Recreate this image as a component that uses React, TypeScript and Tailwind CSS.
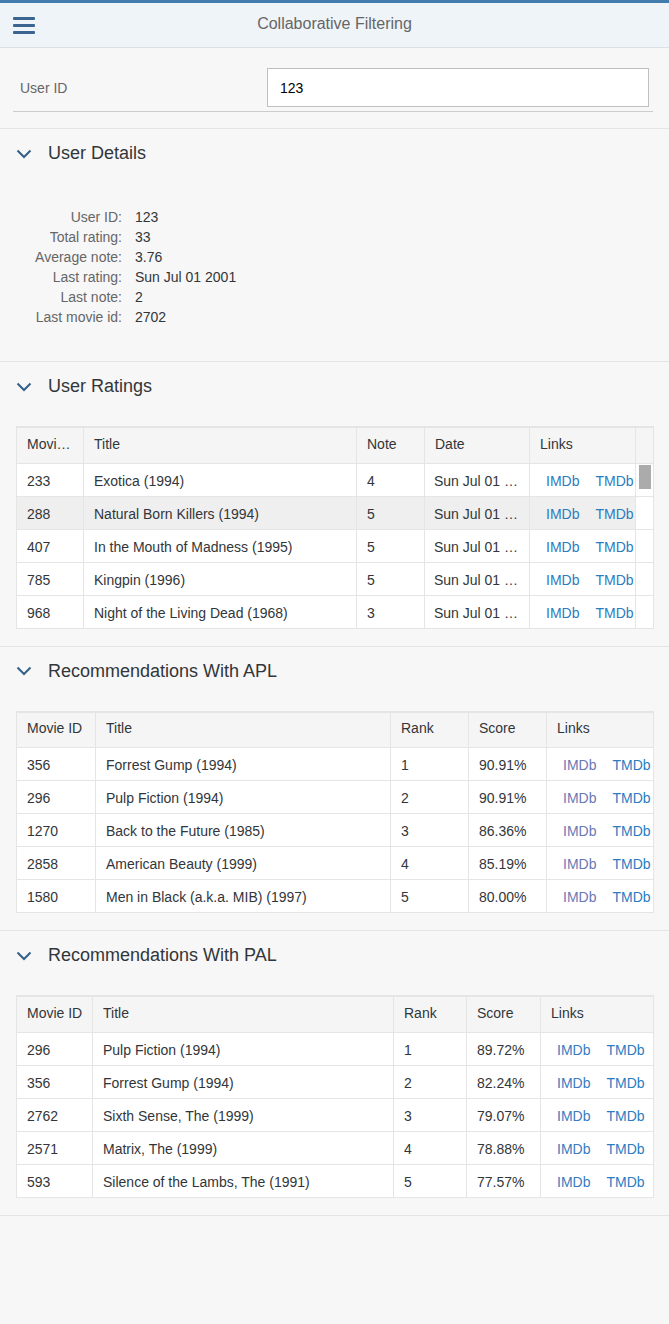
import React from "react";

const LINK = "text-[#2b7cc1]";

function Chevron() {
  return (
    <svg width="16" height="10" viewBox="0 0 16 10" className="shrink-0">
      <polyline points="1.5,1.5 8,8 14.5,1.5" fill="none" stroke="#346187" strokeWidth="2" />
    </svg>
  );
}

function Section({ title, children }: { title: string; children: React.ReactNode }) {
  return (
    <section className="border-t border-[#e5e5e5]">
      <div className="h-[49px] flex items-center pl-[16px]">
        <Chevron />
        <span className="ml-[16px] text-[18px] text-[#32363a]">{title}</span>
      </div>
      {children}
    </section>
  );
}

function Links({ imdbClass }: { imdbClass?: string }) {
  return (
    <div className="flex gap-[16px] pl-[16px] pt-[3px] whitespace-nowrap">
      <span className={imdbClass ?? LINK}>IMDb</span>
      <span className={LINK}>TMDb</span>
    </div>
  );
}

const th = "h-[36px] pl-[10px] pr-[4px] pb-[2px] text-left font-normal text-[#32363a] border-r border-[#e5e5e5] truncate";
const td = "h-[33px] pl-[10px] pr-[6px] pt-[3px] text-[#32363a] border-r border-t border-[#e5e5e5] truncate";
const tdDate = "h-[33px] pl-[9px] pr-[4px] pt-[3px] text-[#32363a] border-r border-t border-[#e5e5e5] whitespace-nowrap";

type Rec = [string, string, string, string];

function RecTable({ cols, rows, imdbClass }: { cols: number[]; rows: Rec[]; imdbClass?: string }) {
  return (
    <div className="px-[16px] pt-[15px] pb-[17px]">
      <table className="w-[637px] table-fixed border-collapse border border-[#e5e5e5] border-t-2 bg-white text-[14px]">
        <colgroup>
          {cols.map((w, i) => (
            <col key={i} style={{ width: w }} />
          ))}
        </colgroup>
        <thead>
          <tr className="bg-[#f5f5f5]">
            <th className={th}>Movie ID</th>
            <th className={th}>Title</th>
            <th className={th}>Rank</th>
            <th className={th}>Score</th>
            <th className={th}>Links</th>
          </tr>
        </thead>
        <tbody>
          {rows.map((r, i) => (
            <tr key={i}>
              <td className={td}>{r[0]}</td>
              <td className={td}>{r[1]}</td>
              <td className={td}>{r[2]}</td>
              <td className={td}>{r[3]}</td>
              <td className="h-[33px] p-0 border-t border-[#e5e5e5]">
                <Links imdbClass={imdbClass} />
              </td>
            </tr>
          ))}
        </tbody>
      </table>
    </div>
  );
}

const ratings: [string, string, string][] = [
  ["233", "Exotica (1994)", "4"],
  ["288", "Natural Born Killers (1994)", "5"],
  ["407", "In the Mouth of Madness (1995)", "5"],
  ["785", "Kingpin (1996)", "5"],
  ["968", "Night of the Living Dead (1968)", "3"],
];

const apl: Rec[] = [
  ["356", "Forrest Gump (1994)", "1", "90.91%"],
  ["296", "Pulp Fiction (1994)", "2", "90.91%"],
  ["1270", "Back to the Future (1985)", "3", "86.36%"],
  ["2858", "American Beauty (1999)", "4", "85.19%"],
  ["1580", "Men in Black (a.k.a. MIB) (1997)", "5", "80.00%"],
];

const pal: Rec[] = [
  ["296", "Pulp Fiction (1994)", "1", "89.72%"],
  ["356", "Forrest Gump (1994)", "2", "82.24%"],
  ["2762", "Sixth Sense, The (1999)", "3", "79.07%"],
  ["2571", "Matrix, The (1999)", "4", "78.88%"],
  ["593", "Silence of the Lambs, The (1991)", "5", "77.57%"],
];

const details: [string, string][] = [
  ["User ID:", "123"],
  ["Total rating:", "33"],
  ["Average note:", "3.76"],
  ["Last rating:", "Sun Jul 01 2001"],
  ["Last note:", "2"],
  ["Last movie id:", "2702"],
];

export default function App() {
  return (
    <div className="min-h-[1324px] bg-[#f7f7f7] font-['Liberation_Sans',Arial,sans-serif] text-[14px] text-[#32363a]">
      <div className="h-[3px] bg-[#427cac]" />
      <header className="h-[45px] bg-[#eff4f9] border-b border-[#d9e0e7] flex items-center">
        <div className="ml-[13px] w-[22px] flex flex-col gap-[4px]">
          <div className="h-[3px] bg-[#3b6490] rounded-[1px]" />
          <div className="h-[3px] bg-[#3b6490] rounded-[1px]" />
          <div className="h-[3px] bg-[#3b6490] rounded-[1px]" />
        </div>
        <div className="flex-1 text-center text-[16px] text-[#666666] pr-[35px] pb-[2px]">Collaborative Filtering</div>
      </header>

      <div className="pl-[13px] pr-[16px] pt-[20px] pb-[16px]">
        <div className="flex items-center border-b border-[#cccccc] pb-[4px]">
          <div className="w-[254px] pl-[7px] pt-[2px] text-[#666666]">User ID</div>
          <div className="flex-1 mr-[4px] h-[39px] bg-white border border-[#bfbfbf] flex items-center px-[12px] pt-[1px] text-[#000000]">
            123
          </div>
        </div>
      </div>

      <Section title="User Details">
        <div className="pt-[29px] pb-[34px] pl-[16px]">
          {details.map(([k, v]) => (
            <div key={k} className="flex h-[20px] items-center">
              <div className="w-[106px] text-right text-[#666666]">{k}</div>
              <div className="ml-[13px] text-[#32363a]">{v}</div>
            </div>
          ))}
        </div>
      </Section>

      <Section title="User Ratings">
        <div className="px-[16px] pt-[15px] pb-[17px]">
          <table className="w-[637px] table-fixed border-collapse border border-[#e5e5e5] border-t-2 bg-white text-[14px]">
            <colgroup>
              <col style={{ width: 67 }} />
              <col style={{ width: 273 }} />
              <col style={{ width: 68 }} />
              <col style={{ width: 105 }} />
              <col style={{ width: 106 }} />
              <col style={{ width: 18 }} />
            </colgroup>
            <thead>
              <tr className="bg-[#f5f5f5]">
                <th className="h-[36px] pl-[10px] pr-[2px] pb-[2px] text-left font-normal text-[#32363a] border-r border-[#e5e5e5] whitespace-nowrap">Movi…</th>
                <th className={th}>Title</th>
                <th className={th}>Note</th>
                <th className={th}>Date</th>
                <th className={th}>Links</th>
                <th className="h-[36px]" />
              </tr>
            </thead>
            <tbody>
              {ratings.map((r, i) => (
                <tr key={i} className={i === 1 ? "bg-[#efefef]" : ""}>
                  <td className={td}>{r[0]}</td>
                  <td className={td}>{r[1]}</td>
                  <td className={td}>{r[2]}</td>
                  <td className={tdDate}>Sun Jul 01 …</td>
                  <td className="h-[33px] p-0 border-t border-r border-[#e5e5e5]">
                    <Links />
                  </td>
                  <td className="bg-white align-top p-0 border-t border-[#e5e5e5]">
                    {i === 0 ? <div className="ml-[3px] mt-[1px] w-[12px] h-[24px] bg-[#ababab]" /> : null}
                  </td>
                </tr>
              ))}
            </tbody>
          </table>
        </div>
      </Section>

      <Section title="Recommendations With APL">
        <RecTable cols={[79, 295, 78, 78, 107]} rows={apl} imdbClass="text-[#6b78b6]" />
      </Section>

      <Section title="Recommendations With PAL">
        <RecTable cols={[76, 301, 73, 74, 113]} rows={pal} imdbClass="text-[#3a7bbf]" />
      </Section>
      <div className="border-t border-[#e5e5e5]" />
    </div>
  );
}
